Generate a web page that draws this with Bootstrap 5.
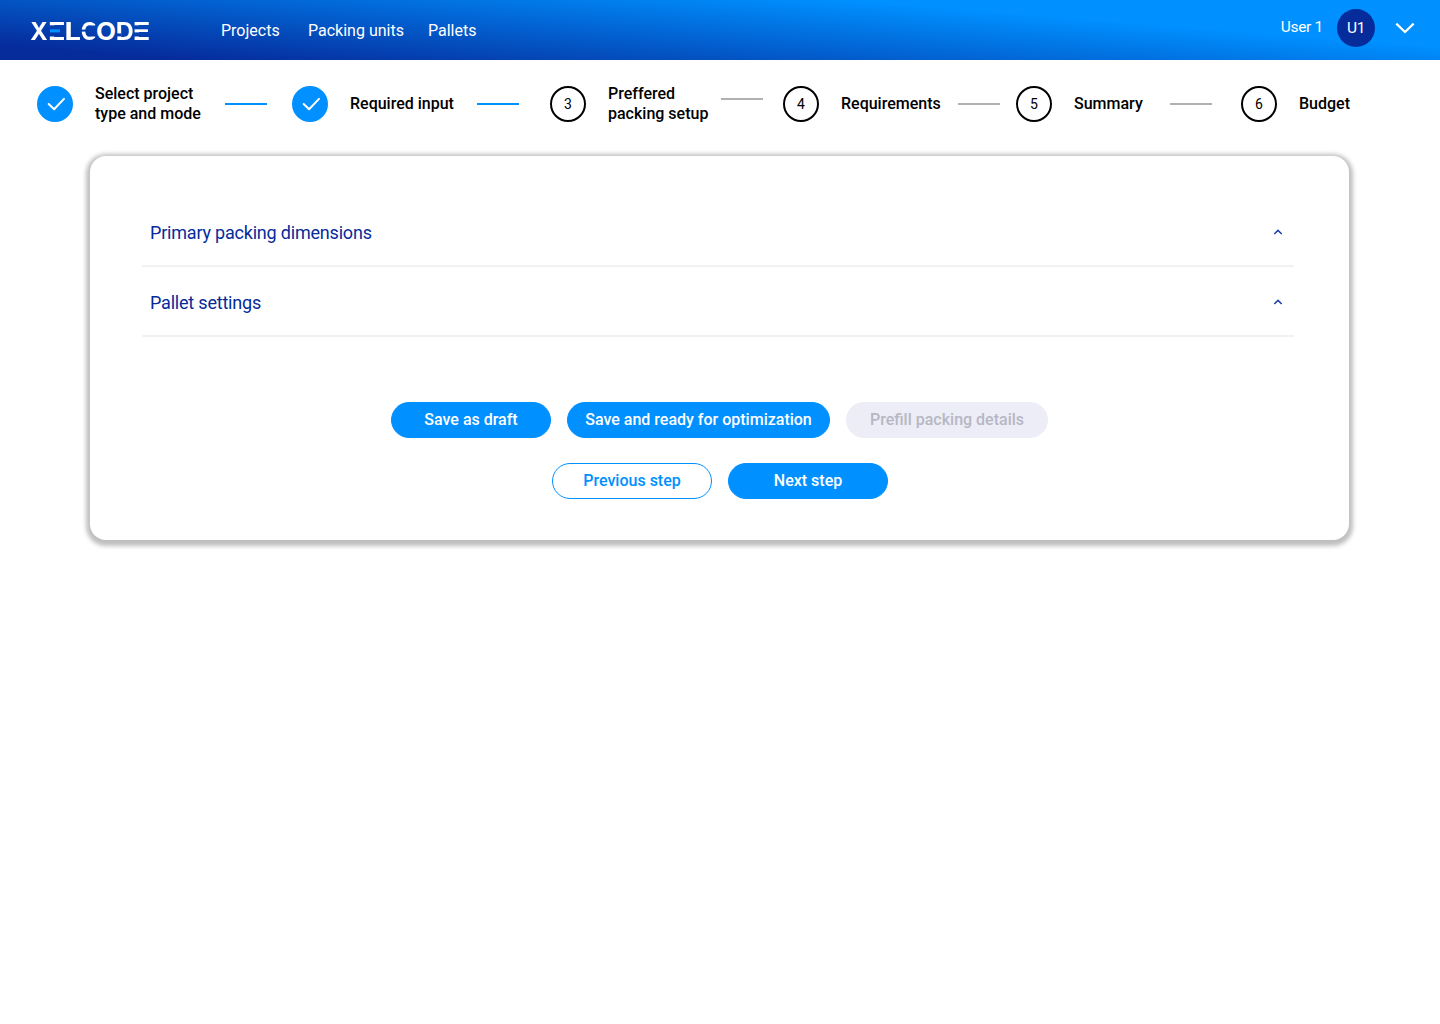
<!DOCTYPE html>
<html lang="en">
<head>
<meta charset="utf-8">
<meta name="viewport" content="width=device-width, initial-scale=1">
<title>Xelcode – Preferred packing setup</title>
<link href="https://cdn.jsdelivr.net/npm/bootstrap@5.3.0/dist/css/bootstrap.min.css" rel="stylesheet">
<style>
  body { font-family: Roboto, "Liberation Sans", sans-serif; font-size: 16px; color: #000; background: #fff; min-height: 100vh; }
  .topbar { height: 60px; padding: 0 25px 0 24px; background: linear-gradient(4.5deg, #062b9b 14px, #0090ff 126px); }
  .brand-logo { width: 132px; height: 40px; margin-right: 65px; overflow: visible; }
  .topbar .nav-link { color: #fff; padding: 0; line-height: 24px; }
  .main-links { padding-top: 1px; }
  .item-projects { width: 87px; }
  .item-units { width: 120px; }
  .user-area { padding-bottom: 4px; color: #fff; }
  .user-name { font-size: 15.5px; letter-spacing: -.3px; line-height: 20px; margin: 0 14px 3px 0; }
  .avatar { width: 38px; height: 38px; padding-top: 2px; background: #062b9b; font-size: 15.5px; letter-spacing: -.4px; margin-right: 20px; }
  .stepper { display: grid; grid-template-columns: 255px 258px 233px 233px 225px 1fr; height: 88px; padding-left: 37px; }
  .step-dot { width: 36px; height: 36px; border: 2px solid #000; font-size: 14px; margin-right: 22px; }
  .step-dot.done { background: #0090ff; border-color: #0090ff; }
  .step-name { font-weight: 500; line-height: 20px; white-space: nowrap; }
  .step-line { width: 42px; height: 2px; background: #b0b0b0; }
  .step-line.done { background: #0090ff; }
  .step-line.raised { margin-bottom: 10px; }
  .end-25 { margin-right: 25px; } .end-31 { margin-right: 31px; } .end-20 { margin-right: 20px; }
  .end-16 { margin-right: 16px; } .end-29 { margin-right: 29px; }
  .panel { width: 1259px; height: 384px; margin: 8px 0 0 90px; padding: 41px 55px 0 52px; border-radius: 16px; box-shadow: 0 2px 4px 4px rgba(0,0,0,.25); }
  .fold-row { height: 70px; padding: 2px 11px 0 8px; border: 0; border-bottom: 2px solid #f2f2f2; background: none; color: #062b9b; font-size: 18px; letter-spacing: -.2px; }
  .actions { margin: 65px -3px 0 0; }
  .pill { height: 36px; padding: 0; border-radius: 18px; font-weight: 500; line-height: 34px; width: 160px;
    --bs-btn-bg: #0090ff; --bs-btn-border-color: #0090ff; --bs-btn-disabled-bg: #ecedf6; --bs-btn-disabled-border-color: #ecedf6; --bs-btn-disabled-color: #b7b7c4; --bs-btn-disabled-opacity: 1; }
  .pill.btn-outline-primary { --bs-btn-bg: #fff; --bs-btn-color: #0090ff; }
  .pill-263 { width: 263px; } .pill-202 { width: 202px; }
  .step-actions { margin: 25px -4px 0 0; }
</style>
</head>
<body>
<nav class="topbar d-flex align-items-center">
  <svg class="brand-logo" viewBox="24 10 132 40" role="img" aria-label="Xelcode">
    <mask id="cuts" maskUnits="userSpaceOnUse" x="24" y="10" width="132" height="40">
      <rect x="24" y="10" width="132" height="40" fill="#fff"/>
      <rect x="49" y="25.3" width="16" height="11.2"/>
      <rect x="134" y="25.3" width="16" height="4"/><rect x="134" y="32.4" width="16" height="4.1"/>
      <rect x="81" y="29.6" width="6" height="2"/>
      <rect x="90.5" y="25.5" width="6" height="11"/><rect x="95.3" y="20" width="1.6" height="22"/>
      <rect x="116" y="33.4" width="5" height="3"/>
    </mask>
    <g fill="#fff" font-family="Inter, sans-serif" font-weight="700" font-size="24" mask="url(#cuts)">
      <text x="30.3" y="39.6" textLength="17.4" lengthAdjust="spacingAndGlyphs">X</text>
      <text x="48" y="39.6" textLength="17.5" lengthAdjust="spacingAndGlyphs">E</text>
      <text x="64.5" y="39.6" textLength="16.5" lengthAdjust="spacingAndGlyphs">L</text>
      <text x="80.8" y="39.6" textLength="17" lengthAdjust="spacingAndGlyphs">C</text>
      <text x="132.8" y="39.6" textLength="17.5" lengthAdjust="spacingAndGlyphs">E</text>
      <text x="115.8" y="39.6" textLength="18" lengthAdjust="spacingAndGlyphs">D</text>
    </g>
    <text x="96" y="39.6" textLength="20" lengthAdjust="spacingAndGlyphs" fill="#fff" font-family="Inter, sans-serif" font-weight="700" font-size="24">O</text>
    <rect x="50" y="29.3" width="10" height="3.1" fill="#0090ff"/>
  </svg>
  <div class="main-links d-flex">
    <a class="nav-link item-projects" href="#">Projects</a>
    <a class="nav-link item-units" href="#">Packing units</a>
    <a class="nav-link" href="#">Pallets</a>
  </div>
  <div class="user-area d-flex align-items-center ms-auto">
    <span class="user-name">User 1</span>
    <span class="avatar rounded-circle d-flex align-items-center justify-content-center">U1</span>
    <svg width="20" height="12" viewBox="0 0 20 12" fill="none" stroke="#fff" stroke-width="2.2"><path d="M1.3 1.6 10 10l8.7-8.4"/></svg>
  </div>
</nav>

<div class="stepper">
  <div class="d-flex align-items-center">
    <span class="step-dot done rounded-circle d-flex align-items-center justify-content-center"><svg width="32" height="32" viewBox="0 0 32 32" fill="none" stroke="#fff" stroke-width="2" stroke-linecap="round" stroke-linejoin="round"><path d="m9.7 16 5.4 5.3L25 10.9"/></svg></span>
    <span class="step-name">Select project<br>type and mode</span>
    <span class="step-line done ms-auto end-25"></span>
  </div>
  <div class="d-flex align-items-center">
    <span class="step-dot done rounded-circle d-flex align-items-center justify-content-center"><svg width="32" height="32" viewBox="0 0 32 32" fill="none" stroke="#fff" stroke-width="2" stroke-linecap="round" stroke-linejoin="round"><path d="m9.7 16 5.4 5.3L25 10.9"/></svg></span>
    <span class="step-name">Required input</span>
    <span class="step-line done ms-auto end-31"></span>
  </div>
  <div class="d-flex align-items-center">
    <span class="step-dot rounded-circle d-flex align-items-center justify-content-center">3</span>
    <span class="step-name">Preffered<br>packing setup</span>
    <span class="step-line raised ms-auto end-20"></span>
  </div>
  <div class="d-flex align-items-center">
    <span class="step-dot rounded-circle d-flex align-items-center justify-content-center">4</span>
    <span class="step-name">Requirements</span>
    <span class="step-line ms-auto end-16"></span>
  </div>
  <div class="d-flex align-items-center">
    <span class="step-dot rounded-circle d-flex align-items-center justify-content-center">5</span>
    <span class="step-name">Summary</span>
    <span class="step-line ms-auto end-29"></span>
  </div>
  <div class="d-flex align-items-center">
    <span class="step-dot rounded-circle d-flex align-items-center justify-content-center">6</span>
    <span class="step-name">Budget</span>
  </div>
</div>

<main class="panel bg-white">
  <button type="button" class="fold-row d-flex w-100 align-items-center justify-content-between">
    <span>Primary packing dimensions</span>
    <svg width="10" height="8" viewBox="0 0 10 8" fill="none" stroke="#1e3faa" stroke-width="1.5"><path d="M1.3 6 5 2.4 8.7 6"/></svg>
  </button>
  <button type="button" class="fold-row d-flex w-100 align-items-center justify-content-between">
    <span>Pallet settings</span>
    <svg width="10" height="8" viewBox="0 0 10 8" fill="none" stroke="#1e3faa" stroke-width="1.5"><path d="M1.3 6 5 2.4 8.7 6"/></svg>
  </button>
  <div class="actions d-flex justify-content-center gap-3">
    <button type="button" class="btn btn-primary pill">Save as draft</button>
    <button type="button" class="btn btn-primary pill pill-263">Save and ready for optimization</button>
    <button type="button" class="btn btn-secondary pill pill-202" disabled>Prefill packing details</button>
  </div>
  <div class="step-actions d-flex justify-content-center gap-3">
    <button type="button" class="btn btn-outline-primary pill">Previous step</button>
    <button type="button" class="btn btn-primary pill">Next step</button>
  </div>
</main>
<script src="https://cdn.jsdelivr.net/npm/bootstrap@5.3.0/dist/js/bootstrap.bundle.min.js"></script>
</body>
</html>
